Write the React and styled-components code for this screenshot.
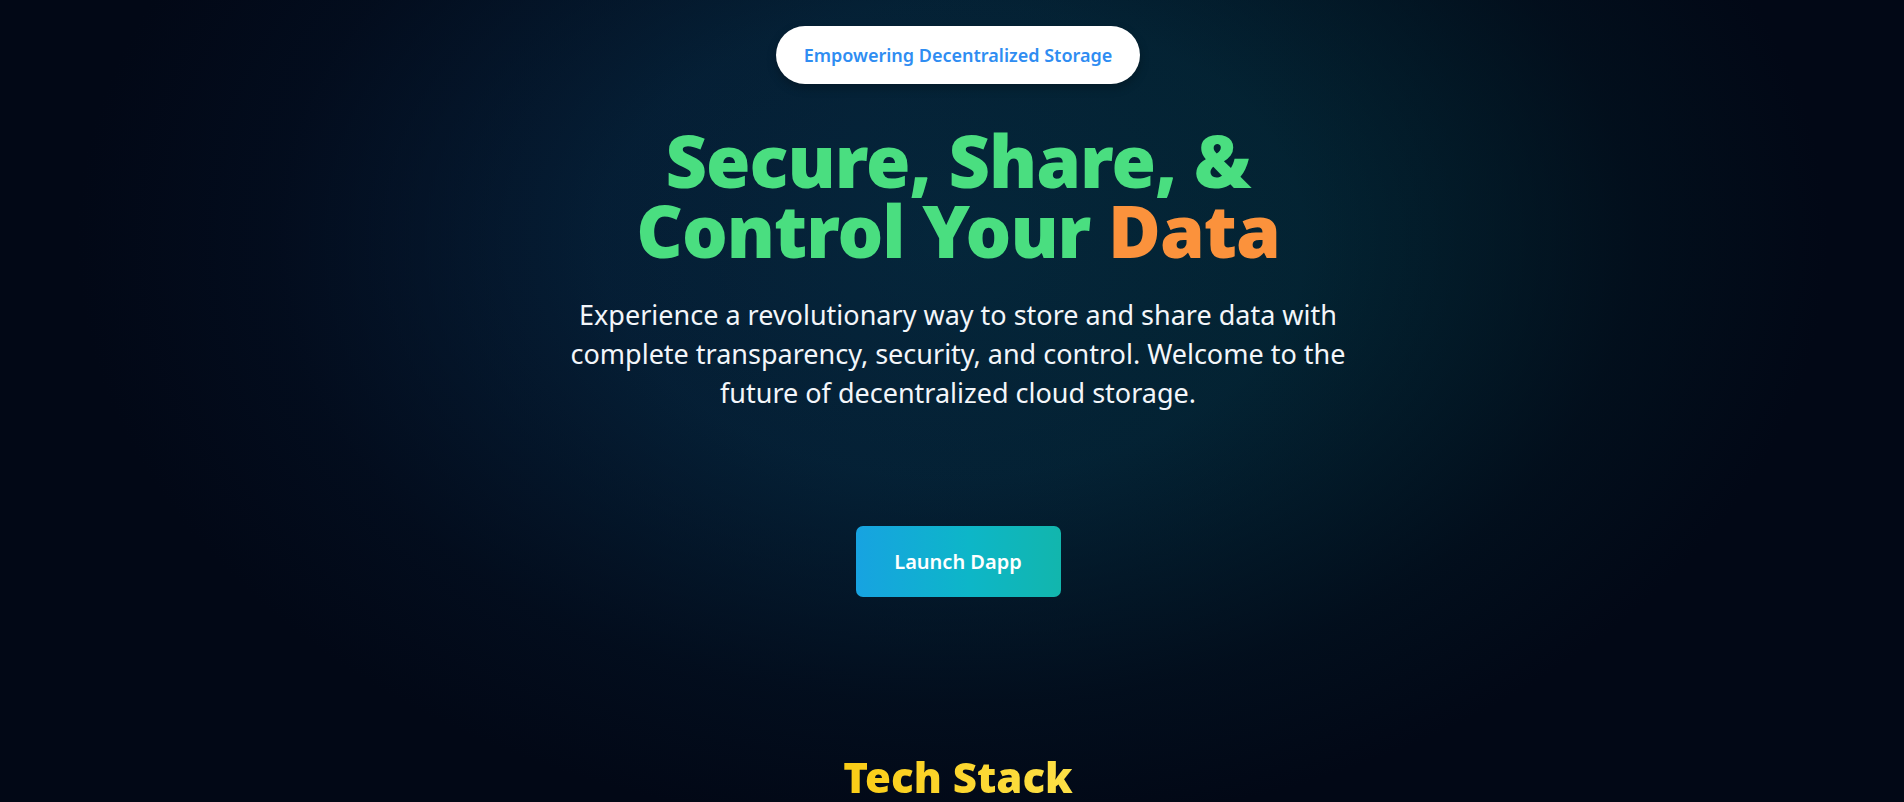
import React from "react";
import styled, { createGlobalStyle } from "styled-components";

const GlobalStyle = createGlobalStyle`
  html, body { margin: 0; padding: 0; background: #020816; }
  body { font-family: "Noto Sans", "Open Sans", sans-serif; }
  * { box-sizing: border-box; }
`;

const Page = styled.main`
  min-height: 802px;
  display: flex;
  flex-direction: column;
  align-items: center;
  padding: 26px 0 0 12px;
  background:
    radial-gradient(ellipse 46% 74% at 50% 30%, rgba(2, 8, 22, 0) 0%, rgba(2, 8, 22, 0.15) 40%, rgba(2, 8, 22, 0.8) 78%, #020816 100%),
    linear-gradient(90deg, #071a38 0%, #05253b 45%, #012c33 100%);
  overflow: hidden;
`;

const Pill = styled.div`
  height: 58px;
  padding: 0 28px;
  display: flex;
  align-items: center;
  border-radius: 999px;
  background: #ffffff;
  color: #2f8df2;
  font-size: 18px;
  font-weight: 600;
  box-shadow: 0 4px 10px rgba(0, 0, 0, 0.25);
`;

const Headline = styled.h1`
  margin: 41px 0 0;
  font-size: 72px;
  line-height: 70px;
  font-weight: 900;
  text-align: center;
  color: #4ade80;
  letter-spacing: -1px;
`;

const Accent = styled.span`
  color: ${(p) => p.$color};
`;

const Lead = styled.p`
  margin: 30px 0 0;
  max-width: 800px;
  font-size: 27px;
  line-height: 39px;
  color: #f3f6fa;
  text-align: center;
`;

const LaunchButton = styled.button`
  margin-top: 114px;
  width: 205px;
  height: 71px;
  border: none;
  border-radius: 7px;
  background: linear-gradient(90deg, #17a3e1 0%, #0db6c8 55%, #12b6ad 100%);
  color: #ffffff;
  font-family: inherit;
  font-size: 20px;
  font-weight: 600;
  cursor: pointer;
`;

const SectionTitle = styled.h2`
  margin: 156px 0 0;
  font-size: 42px;
  line-height: 48px;
  font-weight: 900;
  background: linear-gradient(90deg, #facc15, #fde047);
  -webkit-background-clip: text;
  background-clip: text;
  color: transparent;
`;

export default function App() {
  return (
    <>
      <GlobalStyle />
      <Page>
        <Pill>Empowering Decentralized Storage</Pill>
        <Headline>
          Secure, Share, &amp;
          <br />
          Control Your <Accent $color="#fb923c">Data</Accent>
        </Headline>
        <Lead>
          Experience a revolutionary way to store and share data with complete
          transparency, security, and control. Welcome to the future of
          decentralized cloud storage.
        </Lead>
        <LaunchButton>Launch Dapp</LaunchButton>
        <SectionTitle>Tech Stack</SectionTitle>
      </Page>
    </>
  );
}
